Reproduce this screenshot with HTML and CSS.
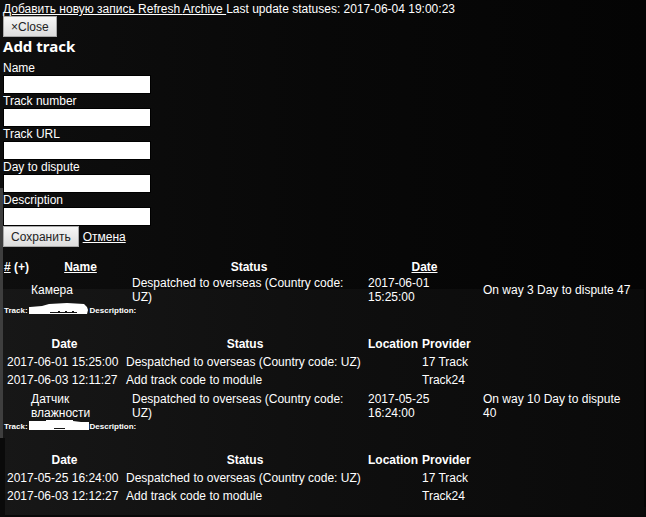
FILE: index.html
```html
<!DOCTYPE html>
<html lang="ru">
<head>
<meta charset="UTF-8">
<meta name="viewport" content="width=device-width, initial-scale=1.0">
<title>Tracks</title>
<link rel="stylesheet" href="styles.css">
</head>
<body>

    <div class="toolbar">
        <a href="#add">Добавить новую запись </a><a href="#refresh">Refresh </a><a href="#archive">Archive </a>Last update statuses: 2017-06-04 19:00:23
    </div>

    <form class="add-form" id="add">
        <button type="button" class="btn btn-close">×Close</button>
        <h3>Add track</h3>
        <label for="name">Name</label>
        <input type="text" id="name">
        <label for="number">Track number</label>
        <input type="text" id="number">
        <label for="url">Track URL</label>
        <input type="text" id="url">
        <label for="dispute">Day to dispute</label>
        <input type="text" id="dispute">
        <label for="description">Description</label>
        <input type="text" id="description">
        <div class="actions">
            <button type="submit" class="btn">Сохранить</button>
            <a href="#cancel">Отмена</a>
        </div>
    </form>

    <table class="tracks">
        <colgroup>
            <col class="col-num">
            <col class="col-name">
            <col class="col-status">
            <col class="col-date">
            <col>
        </colgroup>
        <thead>
            <tr>
                <th class="num"><a href="#num">#</a> (+)</th>
                <th><a href="#name">Name</a></th>
                <th>Status</th>
                <th><a href="#date">Date</a></th>
                <th></th>
            </tr>
        </thead>
        <tbody>
            <tr>
                <td></td>
                <td>Камера</td>
                <td>Despatched to overseas (Country code: UZ)</td>
                <td class="date">2017-06-01 15:25:00</td>
                <td>On way 3 Day to dispute 47</td>
            </tr>
            <tr>
                <td colspan="5">
                    <div class="info">
                        <span>Track:</span>
                        <a href="#track1" aria-label="Track number">
                            <svg class="hidden-code" width="60" height="13" viewBox="0 0 60 13">
                                <path d="M1 4L13 3L20 1L38 0L55 1L58 4L59 7L58 11H48V9H21V10H1V11H0V4Z" fill="#fff"/>
                                <path d="M0 10.500H58M27 9V8M33 9V7M40 9V8M46 9V7" stroke="#fff" fill="none"/>
                                <path d="M21 9.500H47M29 8.500H31M36 8.500H38M43 8.500H45" stroke="#151515" fill="none"/>
                            </svg>
                        </a>
                        <span>Description:</span>
                    </div>
                    <table class="history">
                        <tr><th class="h-date">Date</th><th class="h-status">Status</th><th class="h-location">Location</th><th>Provider</th></tr>
                        <tr><td>2017-06-01 15:25:00</td><td>Despatched to overseas (Country code: UZ)</td><td></td><td>17 Track</td></tr>
                        <tr><td>2017-06-03 12:11:27</td><td>Add track code to module</td><td></td><td>Track24</td></tr>
                    </table>
                </td>
            </tr>
            <tr>
                <td></td>
                <td>Датчик влажности</td>
                <td>Despatched to overseas (Country code: UZ)</td>
                <td class="date">2017-05-25 16:24:00</td>
                <td>On way 10 Day to dispute 40</td>
            </tr>
            <tr>
                <td colspan="5">
                    <div class="info">
                        <span>Track:</span>
                        <a href="#track2" aria-label="Track number">
                            <svg class="hidden-code" width="60" height="13" viewBox="0 0 60 13">
                                <path d="M0 2H17V1H44V2L52 3H60V11H0Z" fill="#fff"/>
                                <path d="M25 9.500H36" stroke="#151515" fill="none"/>
                            </svg>
                        </a>
                        <span>Description:</span>
                    </div>
                    <table class="history">
                        <tr><th class="h-date">Date</th><th class="h-status">Status</th><th class="h-location">Location</th><th>Provider</th></tr>
                        <tr><td>2017-05-25 16:24:00</td><td>Despatched to overseas (Country code: UZ)</td><td></td><td>17 Track</td></tr>
                        <tr><td>2017-06-03 12:12:27</td><td>Add track code to module</td><td></td><td>Track24</td></tr>
                    </table>
                </td>
            </tr>
        </tbody>
    </table>

</body>
</html>
```
FILE: styles.css
```css
    * {
        box-sizing: border-box;
    }
    html {
        background-color: #080808;
        background-image:
            linear-gradient(#3e3e3e, #3e3e3e),
            linear-gradient(#0a0a0a, #0a0a0a),
            linear-gradient(to right, #171717, #0f0f0f 50%, #0a0a0a),
            linear-gradient(to right, #0e0e0e, #080808 50%, #040404);
        background-repeat: no-repeat;
        background-position: 0 188px, 0 438px, 0 289px, 0 0;
        background-size: 3px 250px, 5px 100px, calc(100% - 2px) 226px, 100% 100%;
    }
    body {
        margin: 0;
        padding: 2px 8px 0 3px;
        font: 12px/14px "Liberation Sans", Arial, sans-serif;
        color: white;
    }
    a {
        color: white;
    }
    .add-form {
        display: flex;
        flex-direction: column;
        align-items: flex-start;
    }
    .btn {
        height: 21px;
        padding: 0 7px;
        font: inherit;
        color: #222;
        background: linear-gradient(#f6f6f6, #dddddd);
        border: 1px solid #a9a9a9;
    }
    h3 {
        margin: 0;
        padding-bottom: 6px;
        font: bold 15px/18px "Noto Sans", "Open Sans", sans-serif;
    }
    .add-form input {
        width: 148px;
        height: 19px;
        padding: 0 2px;
        font: inherit;
        background: white;
        border: 1px solid black;
    }
    .actions {
        display: flex;
        align-items: center;
        gap: 4px;
    }

    table {
        border-spacing: 0;
    }
    th, td {
        padding: 1px;
    }
    th {
        text-align: center;
    }
    td {
        text-align: left;
    }
    .tracks {
        width: 100%;
        margin-top: 12px;
        table-layout: fixed;
    }
    .col-num { width: 27px; }
    .col-name { width: 101px; }
    .col-status { width: 236px; }
    .col-date { width: 115px; }
    .num {
        text-align: left;
        white-space: nowrap;
    }
    .date {
        padding-right: 8px;
    }
    .info {
        display: flex;
        align-items: flex-start;
        gap: 1px;
        height: 28px;
        font-size: 8px;
        line-height: 9px;
        font-weight: bold;
    }
    .hidden-code {
        display: block;
        margin-top: -3px;
    }
    .history {
        border-spacing: 2px;
    }
    .h-date { width: 117px; }
    .h-status { width: 240px; }
    .h-location { width: 51px; }
```
